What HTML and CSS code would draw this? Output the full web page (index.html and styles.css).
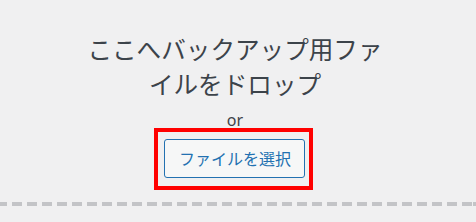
FILE: index.html
```html
<!DOCTYPE html>
<html lang="ja">
<head>
<meta charset="utf-8">
<link rel="stylesheet" href="styles.css">
</head>
<body>
<div class="drop-area">
  <div class="drop-inside">
    <p class="drop-info">ここへバックアップ用ファイルをドロップ</p>
    <p class="drop-or">or</p>
    <div class="highlight">
      <button class="browse-button" type="button">ファイルを選択</button>
    </div>
  </div>
  <div class="dash-line"></div>
</div>
</body>
</html>
```

FILE: styles.css
```css
html, body {
  margin: 0;
  padding: 0;
  background: #f0f0f1;
}

body {
  width: 476px;
  height: 222px;
  overflow: hidden;
  font-family: "Noto Sans CJK JP", "Noto Sans", sans-serif;
  color: #3c434a;
}

.drop-area {
  display: flex;
  flex-direction: column;
}

.drop-inside {
  display: flex;
  flex-direction: column;
  align-items: center;
  padding: 31px 6px 0 0;
}

.drop-info {
  margin: 0;
  width: 310px;
  font-size: 24.6px;
  line-height: 35px;
  text-align: center;
  color: #3c434a;
}

.drop-or {
  margin: 11px 0 0;
  font-family: "Noto Sans", "Liberation Sans", sans-serif;
  font-size: 16px;
  line-height: 16px;
  color: #3c434a;
}

.highlight {
  border: 4px solid #ff0000;
  padding: 7px 4px 8px 6px;
  margin-right: 3px;
}

.browse-button {
  display: block;
  box-sizing: border-box;
  width: 141px;
  height: 39px;
  margin: 0;
  padding: 0 13px 0 14px;
  border: 1px solid #2271b1;
  border-radius: 3px;
  background: #f6f7f7;
  color: #2271b1;
  font-family: "Noto Sans CJK JP", sans-serif;
  font-size: 16px;
  line-height: 37px;
  text-align: center;
  white-space: nowrap;
}

.dash-line {
  margin-top: 12px;
  height: 4px;
  background-image: repeating-linear-gradient(to right, #c3c4c7 0 10px, transparent 10px 15px);
  background-position: -3px 0;
}
```
